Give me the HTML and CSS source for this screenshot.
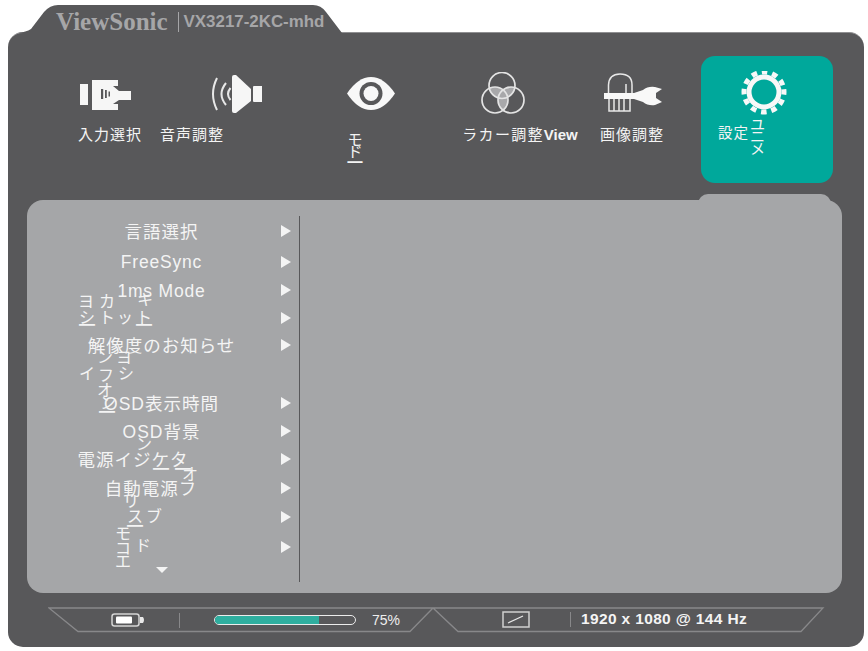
FILE: index.html
```html
<!DOCTYPE html>
<html lang="ja">
<head>
<meta charset="utf-8">
<title>ViewSonic OSD</title>
<link rel="stylesheet" href="styles.css">
</head>
<body>
<div class="monitor">
  <header class="tab">
    <span class="brand">ViewSonic</span>
    <span class="model">VX3217-2KC-mhd</span>
  </header>
  <main class="frame">
    <nav class="nav">
      <div class="item i1">
        <svg class="icon" width="52" height="44" viewBox="0 0 52 44"><path fill="#f6f6f6" d="M0 12h8v21H0zM12 8H38V14H33L39 19H51V28H39L33 32H38V38H12Z"/><path fill="#58585a" d="M21 17h2.200v10H21zM25 18h1.800v8H25zM28.500 19.500h1.500v5h-1.500z"/></svg>
        <div class="label">入力選択</div>
      </div>
      <div class="item i2">
        <svg class="icon speaker" width="52" height="44" viewBox="0 0 52 44"><g fill="none" stroke="#e8e8e8" stroke-width="2"><path d="M6 6Q-2 22 6 38"/><path d="M15 11Q6 22 15 33"/><path d="M19.500 16Q14.500 22 19.500 28"/></g><path fill="#f6f6f6" d="M21 5Q21 3 23 3H25L40 17V29L25 41H23Q21 41 21 39Z"/><path fill="#f6f6f6" d="M42 15Q42 14 43 14H51V30H43Q42 30 42 29Z"/></svg>
        <div class="label">音声調整</div>
      </div>
      <div class="item i3">
        <svg class="icon" width="50" height="44" viewBox="0 0 50 44"><path fill="#f8f8f8" d="M1 21.500Q12 5 25 5T49 21.500Q38 38 25 38T1 21.500Z"/><circle cx="25" cy="21.500" r="11.500" fill="#58585a"/><circle cx="25" cy="21.500" r="7.500" fill="#f8f8f8"/></svg>
        <div class="stack mode"><span>モ</span><span>ド</span><span class="bar-s">ー</span></div>
      </div>
      <div class="item i4">
        <svg class="icon colors" width="50" height="44" viewBox="0 0 50 44">
          <defs>
            <clipPath id="ct"><circle cx="24" cy="13.500" r="13"/></clipPath>
            <clipPath id="cl"><circle cx="17" cy="28" r="13"/></clipPath>
          </defs>
          <g fill="#a8a8aa">
            <circle cx="17" cy="28" r="13" clip-path="url(#ct)"/>
            <circle cx="33" cy="28" r="13" clip-path="url(#ct)"/>
            <circle cx="33" cy="28" r="13" clip-path="url(#cl)"/>
          </g>
          <g fill="none" stroke="#e4e4e4" stroke-width="1.700"><circle cx="24" cy="13.500" r="13"/><circle cx="17" cy="28" r="13"/><circle cx="33" cy="28" r="13"/></g>
        </svg>
        <div class="label view">ラカー調整<b>View</b></div>
      </div>
      <div class="item i5">
        <svg class="icon hand" width="62" height="44" viewBox="0 0 62 44"><g fill="none" stroke="#e8e8e8" stroke-width="1.500"><path d="M7.500 21V13Q8 2 19 2Q31 2 31 13V21"/><path d="M8 27V39H29V27"/><path d="M13 27V39M18 27V39M23 27V39M25 12V21"/></g><path fill="#f8f8f8" d="M3 21H33L42 18Q47 14 54 15L61 17 55 21V26L61 30 54 33Q47 34 42 30L33 27H3Z"/></svg>
        <div class="label">画像調整</div>
      </div>
      <div class="item i6">
        <svg class="icon" width="50" height="44" viewBox="0 0 50 44"><circle cx="25" cy="21" r="15" fill="none" stroke="#f8f8f8" stroke-width="5"/><circle cx="25" cy="21" r="20" fill="none" stroke="#f8f8f8" stroke-width="5" stroke-dasharray="5.500 4.970" transform="rotate(-7.900 25 21)"/></svg>
        <div class="card-label">
          <span class="set">設定</span>
          <div class="stack menu-word"><span>ユ</span><span>ニ</span><span>メ</span></div>
        </div>
      </div>
    </nav>
    <section class="panel">
      <div class="panel-bump"></div>
      <div class="list">
        <div class="row"><span class="name">言語選択</span><i class="arrow"></i></div>
        <div class="row"><span class="name wide">FreeSync</span><i class="arrow"></i></div>
        <div class="row"><span class="name wide">1ms Mode</span><i class="arrow"></i></div>
        <div class="row"><span class="name"></span><i class="arrow"></i></div>
        <div class="row"><span class="name">解像度のお知らせ</span><i class="arrow"></i></div>
        <div class="row"></div>
        <div class="row"><span class="name">OSD表示時間</span><i class="arrow"></i></div>
        <div class="row"><span class="name">OSD背景</span><i class="arrow"></i></div>
        <div class="row"><span class="name far">電源イジケタ</span><i class="arrow"></i></div>
        <div class="row"><span class="name near">自動電源フ</span><i class="arrow"></i></div>
        <div class="row"><span class="name"></span><i class="arrow"></i></div>
        <div class="row"><span class="name"></span><i class="arrow"></i></div>
      </div>
      <div class="divider"></div>
      <span class="g g1">ヨ</span><span class="g g2">カ</span><span class="g g3">キ</span>
      <span class="g g4">シ</span><span class="g g5">ト</span><span class="g g6">ッ</span><span class="g g7">ト</span>
      <span class="g bar g8">ー</span><span class="g bar g9">ー</span>
      <span class="g g10">ン</span><span class="g g11">ヨ</span>
      <span class="g g12">イ</span><span class="g g13">フ</span><span class="g g14">シ</span>
      <span class="g g15">オ</span><span class="g g16">ン</span><span class="g bar g17">ー</span>
      <span class="g g18">ン</span><span class="g bar g19">ー</span><span class="g bar g20">ー</span><span class="g g21">オ</span>
      <span class="g g22">リ</span><span class="g g23">ス</span><span class="g g24">ブ</span><span class="g bar g25">ー</span>
      <span class="g g26">モ</span><span class="g g27">ド</span><span class="g g28">コ</span><span class="g g29">エ</span>
      <i class="down"></i>
    </section>
    <footer class="status">
      <svg class="status-line" width="778" height="26" viewBox="0 0 778 26"><path fill="none" stroke="#88888a" stroke-width="1.300" d="M1 1H775L753 24.500H410L385 1L362 24.500H30Z"/></svg>
      <svg class="battery" width="34" height="14" viewBox="0 0 34 14"><rect x="1" y="1" width="27" height="12" rx="2.500" fill="none" stroke="#d4d4d4" stroke-width="1.500"/><rect x="5" y="3.500" width="16" height="7" rx="1" fill="#fff"/><path fill="#e8e8e8" d="M29 4h3q2 3 0 6h-3z"/></svg>
      <span class="sep sep-a"></span>
      <div class="progress"><div class="fill"></div></div>
      <span class="pct">75%</span>
      <svg class="screen" width="28" height="17" viewBox="0 0 28 17"><rect x="1" y="1" width="26" height="15" fill="none" stroke="#d0d0d0" stroke-width="1.500"/><path stroke="#e8e8e8" stroke-width="1.200" d="M6 12L21 5"/></svg>
      <span class="sep sep-b"></span>
      <span class="res">1920 x 1080 @ 144 Hz</span>
    </footer>
  </main>
</div>
</body>
</html>
```

FILE: styles.css
```css
* { box-sizing: border-box; }
html, body { margin: 0; padding: 0; background: #fff; }
body { width: 868px; height: 651px; overflow: hidden; font-family: "Liberation Sans", "Noto Sans CJK JP", sans-serif; color: #f4f4f4; }
.monitor { padding: 5px 0 0 8px; width: 864px; }

.tab {
  height: 28px;
  width: 334px;
  margin-bottom: -1px;
  padding: 6px 0 0 48px;
  background: #58585a;
  display: flex;
  align-items: center;
  clip-path: path("M10 28 Q18 27 23 24 L36 7 Q42 0 50 0 L305 0 Q313 0 318 7 L334 28 Z");
}
.brand { font-family: "Liberation Serif", serif; font-weight: bold; font-size: 25px; color: #a6a6a8; padding-right: 10px; border-right: 1px solid #a6a6a8; line-height: 20px; }
.model { font-weight: bold; font-size: 16.900px; color: #a6a6a8; margin-left: 5px; white-space: nowrap; }

.frame { background: #58585a; height: 615px; width: 856px; border-radius: 15px; border-top: 1px solid #8f8f91; display: flow-root; }

.nav { display: flex; height: 167px; padding: 23px 0 0 62px; }
.item { display: flex; flex-direction: column; align-items: center; height: 127px; padding-top: 16px; flex: none; }
.icon { flex: none; display: block; }
.i1 { width: 80px; }
.i1 .icon { margin-right: 8px; }
.i2 { width: 80px; margin-left: 2px; }
.speaker { margin-left: 90px; }
.i3 { width: 80px; margin-left: 99px; }
.i4 { width: 118px; margin-left: 50px; }
.colors { margin-right: 34px; }
.i5 { width: 80px; margin-left: 13px; }
.hand { margin-left: 0; }
.i6 { width: 132px; margin-left: 29px; background: #00a89b; border-radius: 14px; }
.i6 .icon { margin-left: -6px; margin-top: -1px; }

.label { margin-top: 10px; font-size: 15px; line-height: 18px; letter-spacing: 1px; white-space: nowrap; }
.label b { font-size: 15px; letter-spacing: 0; }
.label.view { letter-spacing: 1.300px; }
.stack { display: flex; flex-direction: column; align-items: center; font-size: 15px; line-height: 12px; }
.bar-s { font-size: 19px; }
.mode { margin: 18px 32px 0 0; }
.card-label { display: flex; align-self: flex-start; padding-left: 17px; align-items: flex-start; margin-top: 4px; font-size: 14.5px; }
.set { margin-top: 5px; line-height: 18px; letter-spacing: 1px; }
.menu-word { margin-left: 1px; margin-top: 0; }

.panel { position: relative; margin-left: 19px; width: 815px; height: 393px; background: #a5a6a8; border-radius: 16px; }
.panel-bump { position: absolute; top: -6px; left: 671px; width: 133px; height: 12px; background: #a5a6a8; border-radius: 10px 10px 0 0; }
.list { display: grid; width: 264px; padding-top: 16px; grid-template-rows: 30px 31px 26px 29px 26px 31px 28px 28px 28px 30px 27px 34px; grid-template-columns: 1fr; }
.row { display: flex; align-items: center; justify-content: flex-end; }
.name { flex: 1; text-align: center; font-size: 17.500px; letter-spacing: 1px; line-height: 20px; white-space: nowrap; padding-left: 23px; margin-top: 1px; }
.name.wide { letter-spacing: 0.800px; }
.name.far { padding-right: 34px; padding-left: 0; }
.name.near { padding-left: 2px; }
.arrow { flex: none; width: 0; height: 0; border-left: 10px solid #f4f4f4; border-top: 6px solid transparent; border-bottom: 6px solid transparent; margin-left: 8px; }
.divider { position: absolute; left: 272px; top: 16px; width: 1.300px; height: 366px; background: #58585a; }

.g { position: absolute; font-size: 16px; line-height: 16px; width: 16px; text-align: center; }
.g.bar { font-size: 20px; width: 20px; margin-left: -2px; }
.g1 { left: 51px; top: 94px; } .g2 { left: 72px; top: 94px; } .g3 { left: 110px; top: 92px; }
.g4 { left: 52px; top: 110px; } .g5 { left: 72px; top: 110px; } .g6 { left: 90px; top: 110px; } .g7 { left: 109px; top: 110px; }
.g8 { left: 52px; top: 118px; } .g9 { left: 109px; top: 118px; }
.g10 { left: 70px; top: 150px; } .g11 { left: 89px; top: 150px; }
.g12 { left: 52px; top: 166px; } .g13 { left: 71px; top: 168px; } .g14 { left: 91px; top: 166px; }
.g15 { left: 70px; top: 183px; } .g16 { left: 73px; top: 196px; } .g17 { left: 72px; top: 205px; }
.g18 { left: 109px; top: 237px; } .g19 { left: 126px; top: 262px; } .g20 { left: 148px; top: 262px; } .g21 { left: 155px; top: 267px; }
.g22 { left: 96px; top: 294px; } .g23 { left: 100px; top: 309px; } .g24 { left: 119px; top: 309px; } .g25 { left: 100px; top: 319px; }
.g26 { left: 88px; top: 326px; } .g27 { left: 108px; top: 338px; } .g28 { left: 88px; top: 341px; } .g29 { left: 88px; top: 354px; }
.down { position: absolute; left: 129px; top: 367px; width: 0; height: 0; border-top: 6px solid #f4f4f4; border-left: 6px solid transparent; border-right: 6px solid transparent; }

.status { position: relative; display: flex; align-items: center; height: 26px; width: 778px; margin: 14px 0 0 40px; padding-left: 63px; }
.status-line { position: absolute; left: 0; top: 0; }
.battery, .sep, .progress, .pct, .screen, .res { position: relative; flex: none; }
.sep { width: 1px; height: 15px; background: #88888a; }
.sep-a { margin-left: 34px; }
.progress { margin-left: 34px; width: 142px; height: 10px; border: 1.500px solid #ececec; border-radius: 5px; overflow: hidden; }
.fill { width: 74%; height: 100%; background: #2fae9f; }
.pct { margin-left: 16px; font-size: 14px; line-height: 18px; color: #eee; }
.screen { margin-left: 102px; margin-top: -1px; }
.sep-b { margin-left: 40px; margin-top: -2px; }
.res { margin-left: 10px; font-weight: bold; font-size: 15.500px; letter-spacing: 0.350px; line-height: 18px; margin-top: -2px; white-space: nowrap; }
```
